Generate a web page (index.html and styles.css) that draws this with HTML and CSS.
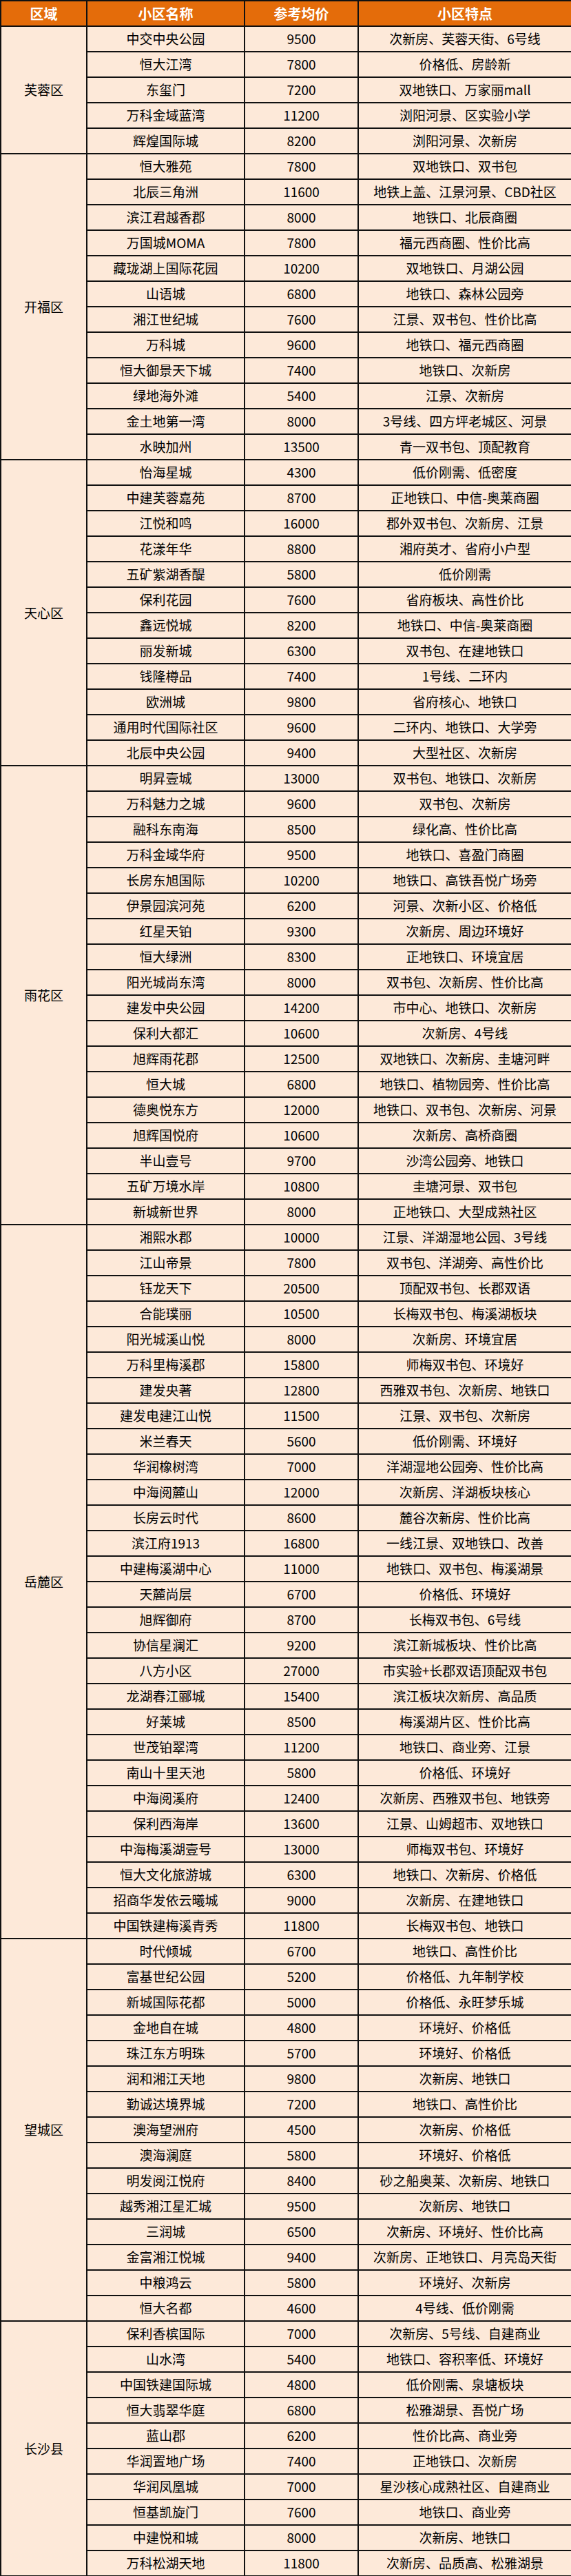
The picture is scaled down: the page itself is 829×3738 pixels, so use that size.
FILE: index.html
```html
<!DOCTYPE html>
<html lang="zh-CN">
<head>
<meta charset="utf-8">
<title>长沙小区参考均价</title>
<link rel="stylesheet" href="styles.css">
</head>
<body>
<table class="price">
<colgroup><col class="c-area"><col class="c-name"><col class="c-price"><col class="c-feat"></colgroup>
<thead>
<tr><th>区域</th><th>小区名称</th><th>参考均价</th><th>小区特点</th></tr>
</thead>
<tbody>
<tr><td class="area" rowspan="5">芙蓉区</td><td>中交中央公园</td><td>9500</td><td>次新房、芙蓉天街、6号线</td></tr>
<tr><td>恒大江湾</td><td>7800</td><td>价格低、房龄新</td></tr>
<tr><td>东玺门</td><td>7200</td><td>双地铁口、万家丽mall</td></tr>
<tr><td>万科金域蓝湾</td><td>11200</td><td>浏阳河景、区实验小学</td></tr>
<tr><td>辉煌国际城</td><td>8200</td><td>浏阳河景、次新房</td></tr>

<tr><td class="area" rowspan="12">开福区</td><td>恒大雅苑</td><td>7800</td><td>双地铁口、双书包</td></tr>
<tr><td>北辰三角洲</td><td>11600</td><td>地铁上盖、江景河景、CBD社区</td></tr>
<tr><td>滨江君越香郡</td><td>8000</td><td>地铁口、北辰商圈</td></tr>
<tr><td>万国城MOMA</td><td>7800</td><td>福元西商圈、性价比高</td></tr>
<tr><td>藏珑湖上国际花园</td><td>10200</td><td>双地铁口、月湖公园</td></tr>
<tr><td>山语城</td><td>6800</td><td>地铁口、森林公园旁</td></tr>
<tr><td>湘江世纪城</td><td>7600</td><td>江景、双书包、性价比高</td></tr>
<tr><td>万科城</td><td>9600</td><td>地铁口、福元西商圈</td></tr>
<tr><td>恒大御景天下城</td><td>7400</td><td>地铁口、次新房</td></tr>
<tr><td>绿地海外滩</td><td>5400</td><td>江景、次新房</td></tr>
<tr><td>金土地第一湾</td><td>8000</td><td>3号线、四方坪老城区、河景</td></tr>
<tr><td>水映加州</td><td>13500</td><td>青一双书包、顶配教育</td></tr>

<tr><td class="area" rowspan="12">天心区</td><td>怡海星城</td><td>4300</td><td>低价刚需、低密度</td></tr>
<tr><td>中建芙蓉嘉苑</td><td>8700</td><td>正地铁口、中信-奥莱商圈</td></tr>
<tr><td>江悦和鸣</td><td>16000</td><td>郡外双书包、次新房、江景</td></tr>
<tr><td>花漾年华</td><td>8800</td><td>湘府英才、省府小户型</td></tr>
<tr><td>五矿紫湖香醍</td><td>5800</td><td>低价刚需</td></tr>
<tr><td>保利花园</td><td>7600</td><td>省府板块、高性价比</td></tr>
<tr><td>鑫远悦城</td><td>8200</td><td>地铁口、中信-奥莱商圈</td></tr>
<tr><td>丽发新城</td><td>6300</td><td>双书包、在建地铁口</td></tr>
<tr><td>钱隆樽品</td><td>7400</td><td>1号线、二环内</td></tr>
<tr><td>欧洲城</td><td>9800</td><td>省府核心、地铁口</td></tr>
<tr><td>通用时代国际社区</td><td>9600</td><td>二环内、地铁口、大学旁</td></tr>
<tr><td>北辰中央公园</td><td>9400</td><td>大型社区、次新房</td></tr>

<tr><td class="area" rowspan="18">雨花区</td><td>明昇壹城</td><td>13000</td><td>双书包、地铁口、次新房</td></tr>
<tr><td>万科魅力之城</td><td>9600</td><td>双书包、次新房</td></tr>
<tr><td>融科东南海</td><td>8500</td><td>绿化高、性价比高</td></tr>
<tr><td>万科金域华府</td><td>9500</td><td>地铁口、喜盈门商圈</td></tr>
<tr><td>长房东旭国际</td><td>10200</td><td>地铁口、高铁吾悦广场旁</td></tr>
<tr><td>伊景园滨河苑</td><td>6200</td><td>河景、次新小区、价格低</td></tr>
<tr><td>红星天铂</td><td>9300</td><td>次新房、周边环境好</td></tr>
<tr><td>恒大绿洲</td><td>8300</td><td>正地铁口、环境宜居</td></tr>
<tr><td>阳光城尚东湾</td><td>8000</td><td>双书包、次新房、性价比高</td></tr>
<tr><td>建发中央公园</td><td>14200</td><td>市中心、地铁口、次新房</td></tr>
<tr><td>保利大都汇</td><td>10600</td><td>次新房、4号线</td></tr>
<tr><td>旭辉雨花郡</td><td>12500</td><td>双地铁口、次新房、圭塘河畔</td></tr>
<tr><td>恒大城</td><td>6800</td><td>地铁口、植物园旁、性价比高</td></tr>
<tr><td>德奥悦东方</td><td>12000</td><td>地铁口、双书包、次新房、河景</td></tr>
<tr><td>旭辉国悦府</td><td>10600</td><td>次新房、高桥商圈</td></tr>
<tr><td>半山壹号</td><td>9700</td><td>沙湾公园旁、地铁口</td></tr>
<tr><td>五矿万境水岸</td><td>10800</td><td>圭塘河景、双书包</td></tr>
<tr><td>新城新世界</td><td>8000</td><td>正地铁口、大型成熟社区</td></tr>

<tr><td class="area" rowspan="28">岳麓区</td><td>湘熙水郡</td><td>10000</td><td>江景、洋湖湿地公园、3号线</td></tr>
<tr><td>江山帝景</td><td>7800</td><td>双书包、洋湖旁、高性价比</td></tr>
<tr><td>钰龙天下</td><td>20500</td><td>顶配双书包、长郡双语</td></tr>
<tr><td>合能璞丽</td><td>10500</td><td>长梅双书包、梅溪湖板块</td></tr>
<tr><td>阳光城溪山悦</td><td>8000</td><td>次新房、环境宜居</td></tr>
<tr><td>万科里梅溪郡</td><td>15800</td><td>师梅双书包、环境好</td></tr>
<tr><td>建发央著</td><td>12800</td><td>西雅双书包、次新房、地铁口</td></tr>
<tr><td>建发电建江山悦</td><td>11500</td><td>江景、双书包、次新房</td></tr>
<tr><td>米兰春天</td><td>5600</td><td>低价刚需、环境好</td></tr>
<tr><td>华润橡树湾</td><td>7000</td><td>洋湖湿地公园旁、性价比高</td></tr>
<tr><td>中海阅麓山</td><td>12000</td><td>次新房、洋湖板块核心</td></tr>
<tr><td>长房云时代</td><td>8600</td><td>麓谷次新房、性价比高</td></tr>
<tr><td>滨江府1913</td><td>16800</td><td>一线江景、双地铁口、改善</td></tr>
<tr><td>中建梅溪湖中心</td><td>11000</td><td>地铁口、双书包、梅溪湖景</td></tr>
<tr><td>天麓尚层</td><td>6700</td><td>价格低、环境好</td></tr>
<tr><td>旭辉御府</td><td>8700</td><td>长梅双书包、6号线</td></tr>
<tr><td>协信星澜汇</td><td>9200</td><td>滨江新城板块、性价比高</td></tr>
<tr><td>八方小区</td><td>27000</td><td>市实验+长郡双语顶配双书包</td></tr>
<tr><td>龙湖春江郦城</td><td>15400</td><td>滨江板块次新房、高品质</td></tr>
<tr><td>好莱城</td><td>8500</td><td>梅溪湖片区、性价比高</td></tr>
<tr><td>世茂铂翠湾</td><td>11200</td><td>地铁口、商业旁、江景</td></tr>
<tr><td>南山十里天池</td><td>5800</td><td>价格低、环境好</td></tr>
<tr><td>中海阅溪府</td><td>12400</td><td>次新房、西雅双书包、地铁旁</td></tr>
<tr><td>保利西海岸</td><td>13600</td><td>江景、山姆超市、双地铁口</td></tr>
<tr><td>中海梅溪湖壹号</td><td>13000</td><td>师梅双书包、环境好</td></tr>
<tr><td>恒大文化旅游城</td><td>6300</td><td>地铁口、次新房、价格低</td></tr>
<tr><td>招商华发依云曦城</td><td>9000</td><td>次新房、在建地铁口</td></tr>
<tr><td>中国铁建梅溪青秀</td><td>11800</td><td>长梅双书包、地铁口</td></tr>

<tr><td class="area" rowspan="15">望城区</td><td>时代倾城</td><td>6700</td><td>地铁口、高性价比</td></tr>
<tr><td>富基世纪公园</td><td>5200</td><td>价格低、九年制学校</td></tr>
<tr><td>新城国际花都</td><td>5000</td><td>价格低、永旺梦乐城</td></tr>
<tr><td>金地自在城</td><td>4800</td><td>环境好、价格低</td></tr>
<tr><td>珠江东方明珠</td><td>5700</td><td>环境好、价格低</td></tr>
<tr><td>润和湘江天地</td><td>9800</td><td>次新房、地铁口</td></tr>
<tr><td>勤诚达境界城</td><td>7200</td><td>地铁口、高性价比</td></tr>
<tr><td>澳海望洲府</td><td>4500</td><td>次新房、价格低</td></tr>
<tr><td>澳海澜庭</td><td>5800</td><td>环境好、价格低</td></tr>
<tr><td>明发阅江悦府</td><td>8400</td><td>砂之船奥莱、次新房、地铁口</td></tr>
<tr><td>越秀湘江星汇城</td><td>9500</td><td>次新房、地铁口</td></tr>
<tr><td>三润城</td><td>6500</td><td>次新房、环境好、性价比高</td></tr>
<tr><td>金富湘江悦城</td><td>9400</td><td>次新房、正地铁口、月亮岛天街</td></tr>
<tr><td>中粮鸿云</td><td>5800</td><td>环境好、次新房</td></tr>
<tr><td>恒大名都</td><td>4600</td><td>4号线、低价刚需</td></tr>

<tr><td class="area" rowspan="10">长沙县</td><td>保利香槟国际</td><td>7000</td><td>次新房、5号线、自建商业</td></tr>
<tr><td>山水湾</td><td>5400</td><td>地铁口、容积率低、环境好</td></tr>
<tr><td>中国铁建国际城</td><td>4800</td><td>低价刚需、泉塘板块</td></tr>
<tr><td>恒大翡翠华庭</td><td>6800</td><td>松雅湖景、吾悦广场</td></tr>
<tr><td>蓝山郡</td><td>6200</td><td>性价比高、商业旁</td></tr>
<tr><td>华润置地广场</td><td>7400</td><td>正地铁口、次新房</td></tr>
<tr><td>华润凤凰城</td><td>7000</td><td>星沙核心成熟社区、自建商业</td></tr>
<tr><td>恒基凯旋门</td><td>7600</td><td>地铁口、商业旁</td></tr>
<tr><td>中建悦和城</td><td>8000</td><td>次新房、地铁口</td></tr>
<tr><td>万科松湖天地</td><td>11800</td><td>次新房、品质高、松雅湖景</td></tr>
</tbody>
</table>
</body>
</html>
```

FILE: styles.css
```css
html, body {
  margin: 0;
  padding: 0;
  background: #ffffff;
}

.price {
  width: 829px;
  border-collapse: collapse;
  table-layout: fixed;
  font-family: "Noto Sans CJK SC", "Noto Sans", sans-serif;
  font-size: 19px;
  color: #000000;
}

.c-area { width: 125px; }
.c-name { width: 229px; }
.c-price { width: 165px; }
.c-feat { width: 310px; }

.price tr {
  height: 37px;
}

.price th,
.price td {
  border: 2px solid #111111;
  padding: 0;
  text-align: center;
  vertical-align: middle;
  line-height: 1.2;
  white-space: nowrap;
}

.price th {
  background: #e46c0a;
  color: #ffffff;
  font-weight: bold;
  font-size: 20px;
}

.price td {
  background: #fde9d9;
}
```
